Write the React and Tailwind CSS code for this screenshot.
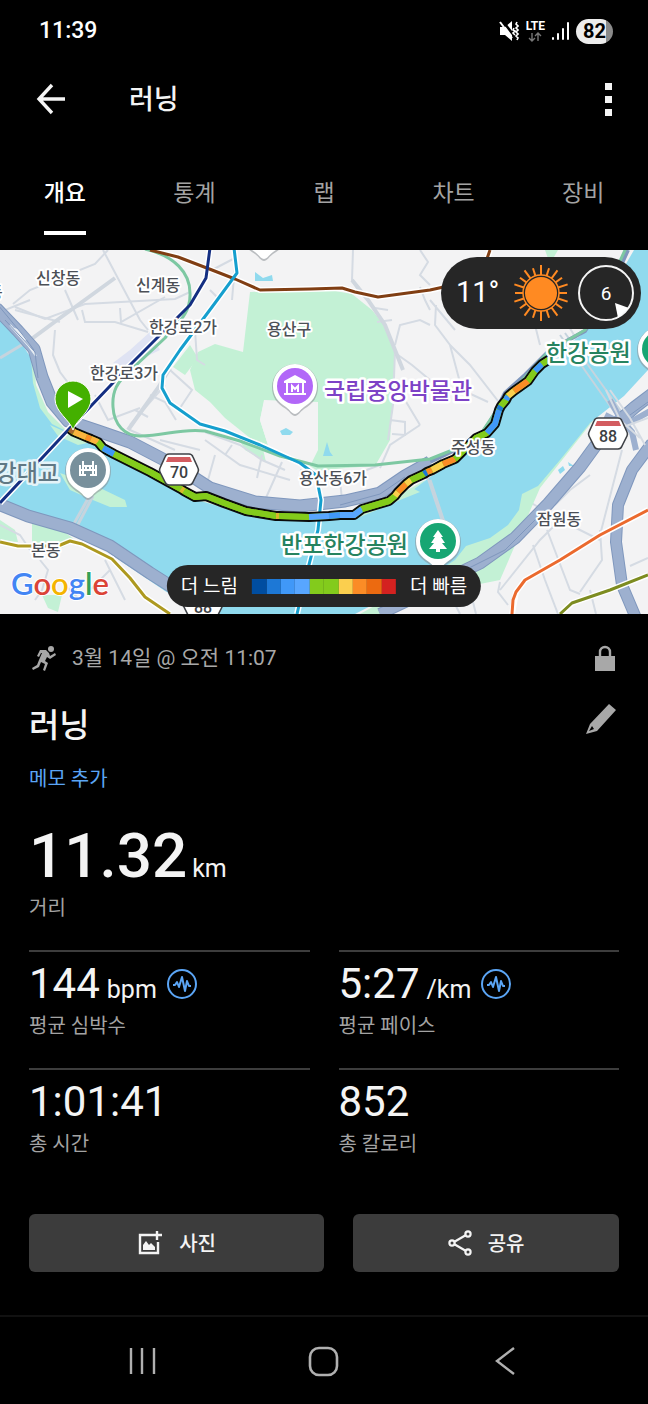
import React, { useState } from "react";

const TABS = ["개요", "통계", "랩", "차트", "장비"];

const PACE_COLORS = [
  "bg-[#004da0]",
  "bg-[#1d78d6]",
  "bg-[#4098f8]",
  "bg-[#58a6ff]",
  "bg-[#83cb1c]",
  "bg-[#83cb1c]",
  "bg-[#fbcf4e]",
  "bg-[#fb8c26]",
  "bg-[#ec6a10]",
  "bg-[#d42220]",
];

// Track points, split wherever the pace colour changes
const ROUTE = [
  { color: "#a8662f", points: "70,429 74,432" },
  { color: "#fbb33f", points: "74,432 86,437" },
  { color: "#fb8c26", points: "86,437 91,439" },
  { color: "#fbb33f", points: "91,439 98,442" },
  { color: "#83cb1c", points: "98,442 103,448" },
  { color: "#4098f8", points: "103,448 114,454" },
  { color: "#83cb1c", points: "114,454 150,472 181,489" },
  { color: "#d8b62c", points: "181,489 184,491" },
  { color: "#83cb1c", points: "184,491 195,497 206,496 224,503 246,511 276,516" },
  { color: "#d8b62c", points: "276,516 279,516" },
  { color: "#83cb1c", points: "279,516 309,517" },
  { color: "#58a6ff", points: "309,517 329,516" },
  { color: "#4098f8", points: "329,516 340,515" },
  { color: "#58a6ff", points: "340,515 354,515 362,509" },
  { color: "#83cb1c", points: "362,509 389,501 395,496" },
  { color: "#fbcf4e", points: "395,496 398,492" },
  { color: "#fb8c26", points: "398,492 406,484" },
  { color: "#fbcf4e", points: "406,484 411,480" },
  { color: "#83cb1c", points: "411,480 424,474" },
  { color: "#1d78d6", points: "424,474 427,472" },
  { color: "#fb8c26", points: "427,472 432,470" },
  { color: "#fbcf4e", points: "432,470 443,464" },
  { color: "#fb8c26", points: "443,464 455,459" },
  { color: "#83cb1c", points: "455,459 466,448 476,438 487,433" },
  { color: "#4098f8", points: "487,433 495,424 499,410" },
  { color: "#1d78d6", points: "499,410 501,406" },
  { color: "#83cb1c", points: "501,406 506,400" },
  { color: "#4098f8", points: "506,400 508,396" },
  { color: "#fbcf4e", points: "508,396 514,391" },
  { color: "#fb8c26", points: "514,391 528,381" },
  { color: "#83cb1c", points: "528,381 535,371" },
  { color: "#4098f8", points: "535,371 542,364" },
  { color: "#83cb1c", points: "542,364 550,359" },
];

const MINOR_ROADS = [
  "M0 312 30 300M13 304 30 290 95 264 108 250M15 307 45 319 85 304 175 299 190 292",
  "M15 310 60 322M103 250 140 320 148 330M65 290 78 320M82 310 85 322 115 322 148 332",
  "M55 330 53 355 60 372 72 388M120 308 121 322 165 297M95 395 108 420 140 408",
  "M130 425 165 385M135 410 148 417M150 395 165 402 176 420M170 370 192 390 180 408",
  "M195 330 197 360 205 365M212 270 235 258M210 290 218 298M235 265 232 300",
  "M353 250 352 280 358 290M420 287 425 300 430 310M375 308 388 310M377 322 392 320",
  "M395 345 400 325 420 320 430 325M398 355 412 365 430 380M395 350 393 405 388 440",
  "M390 420 405 422 405 435 392 434M430 300 455 330M436 305 435 325 450 345 462 390 488 402",
  "M420 250 428 262 420 275 430 285M405 400 420 425M450 345 470 365 505 410",
  "M535 325 540 345M565 320 580 345",
  "M205 432 240 445 262 460 285 470M232 445 225 455M262 455 257 478M282 462 265 500",
  "M205 440 240 465 290 480M340 480 342 500M380 468 390 445 420 425M160 440 200 450",
  "M130 430 175 450M215 455 208 480M300 470 340 480 380 465",
  "M40 560 48 570 42 590 35 600M0 525 20 535 30 550M90 590 110 570M60 580 80 600M105 560 125 600",
  "M518 495 560 520 600 540M500 590 540 540 560 520M500 582 498 592 508 605M547 530 570 590 580 594",
  "M533 545 545 580 558 614M600 530 602 560 580 592M622 450 600 535M590 475 570 490 555 505",
  "M630 566 648 558M470 590 476 614M440 575 460 614M590 590 596 614",
];

const PLACES = [
  { name: "신창동", x: 36, y: 284 },
  { name: "신계동", x: 136, y: 291 },
  { name: "한강로2가", x: 149, y: 333 },
  { name: "한강로3가", x: 90, y: 379 },
  { name: "용산구", x: 267, y: 335 },
  { name: "용산동6가", x: 299, y: 484 },
  { name: "주성동", x: 451, y: 453 },
  { name: "잠원동", x: 537, y: 525 },
  { name: "본동", x: 31, y: 556 },
  { name: "동", x: -12, y: 298 },
];

function Shield({ x, y, label }) {
  return (
    <g transform={`translate(${x} ${y})`}>
      <path d="M-10-16H10Q13-16 14-13L19-2Q20 0 19 2L14 12Q13 15 10 15H-10Q-13 15-14 12L-19 2Q-20 0-19-2L-14-13Q-13-16-10-16Z" fill="#fff" stroke="#3f4247" strokeWidth="1.6" />
      <path d="M-11-13H11L13-8H-13Z" fill="#d35c60" />
      <text x="0" y="8" textAnchor="middle" className="text-[16px] font-medium" fill="#3c4043">{label}</text>
    </g>
  );
}

function Pin({ x, y, color, children }) {
  return (
    <g transform={`translate(${x} ${y})`}>
      <path d="M0 29C-3 29-5 25-9 22C-18 17-23 10-23 0A23 23 0 0 1 23 0C23 10 18 17 9 22C5 25 3 29 0 29Z" fill="#8b9096" opacity=".55" transform="translate(0 1)" />
      <path d="M0 28C-3 28-5 24-9 21C-17 16-22 10-22 0A22 22 0 0 1 22 0C22 10 17 16 9 21C5 24 3 28 0 28Z" fill="#fff" />
      <circle r="18" fill={color} />
      {children}
    </g>
  );
}

function RouteMap() {
  return (
    <svg viewBox="0 250 648 364" preserveAspectRatio="xMidYMid slice" className="block h-full w-full" role="img" aria-label="러닝">
      <rect y="250" width="648" height="364" fill="#f3f3f4" />

      {/* parks */}
      <g fill="#c3f1d5">
        <path d="M250 292 330 290 352 294 372 310 388 330 395 350 395 385 391 425 390 440 375 466 345 468 318 471 310 466 318 450 318 402 264 400 260 420 268 445 250 438 225 418 210 402 195 390 190 370 198 352 215 344 243 352Z" />
        <path d="M190 345 198 358 185 375 173 367Z" />
        <path d="M235 432 262 445 266 462 245 450ZM0 520 15 530 18 542 0 541ZM32 523 62 530 75 540 62 548 32 545ZM42 595 62 595 58 612 48 608Z" />
        <path d="M135 552 148 570 140 566ZM545 250 558 250 550 264ZM360 614 385 600 390 614Z" />
      </g>
      <path d="M113 363 130 350 150 332 160 350 125 367Z" fill="#dfe3f3" />
      <path d="M318 402H264L260 420 268 445 310 462 318 435Z" fill="#f3f3f4" />
      <path d="M255 272 263 278 272 275 273 281H255ZM280 431 286 428 293 432 290 435 282 435ZM327 442 330 452 333 456 323 456Z" fill="#90daee" />

      <g fill="none" stroke="#d5dbe3" strokeWidth="2">
        {MINOR_ROADS.map((d) => (
          <path key={d} d={d} />
        ))}
      </g>
      <path d="M0 360 30 340 60 318 82 302 115 278" fill="none" stroke="#d0d7df" strokeWidth="4" />
      <path d="M352 280 368 300 385 325 395 350 403 370" fill="none" stroke="#d0d7df" strokeWidth="4" />
      <path d="M128 430 158 388 170 368" fill="none" stroke="#d0d7df" strokeWidth="4" />

      {/* river with its green banks */}
      <path d="M33 350 36 385 48 412 70 434 110 457 180 494 240 513 300 522 340 519 380 506 425 480 412 500 340 530 200 520 60 450 20 400ZM648 365 600 412 540 488 500 580 400 600 420 560 470 515 560 440 648 350Z" fill="#c3f1d5" />
      <path d="M0 318 18 338 31 358 33 383 40 408 52 424 68 432 100 445 118 461 150 476 190 498 245 514 280 519 320 521 360 517 392 504 400 500 430 477 470 452 492 433 500 405 512 390 530 378 548 358 580 336 600 318 616 281 634 250H648V370L624 396 590 423 560 460 538 486 522 494 519 510 508 525 490 538 466 546 455 560 425 580 390 596 355 614H205L165 591 122 562 75 528 30 514 0 502Z" fill="#90daee" />
      <path d="M60 473 80 480 100 488 125 500 127 507 110 507 88 498 70 490ZM50 425 70 434 92 442 78 445 58 436ZM395 497 412 488 420 492 400 500Z" fill="#c3f1d5" />
      <path d="M558 470 563 466 565 470 560 474ZM568 462 574 466 569 466Z" fill="#90daee" />

      {/* bridges */}
      <g fill="none" stroke="#c6d4de" strokeWidth="2">
        <path d="M0 358 30 340M90 495 71 529M93 496 75 530M430 480 445 525" strokeWidth="3" />
        <path d="M560 335 620 420M565 333 626 418M425 470 445 530" />
      </g>

      {/* expressways */}
      <g fill="none" strokeLinejoin="round">
        <g stroke="#7f97bd">
          <path d="M-4 308 18 331 34 349 42 377 52 402 68 421 98 431 130 442 176 466 210 488 255 502 300 506 345 501 380 493 405 476 430 462" strokeWidth="13" />
          <path d="M-4 503 28 516 70 528 110 546 150 573 172 587M455 575 480 563 515 538 548 504 580 467 604 434 635 407 652 394" strokeWidth="13" />
          <path d="M652 443 632 470 618 505 616 542 622 585 636 618" strokeWidth="12" />
          <path d="M430 462 455 450 480 438 494 415 505 393 525 375 550 350 585 331 604 302 628 250" strokeWidth="4" />
          <path d="M380 614 405 602 430 590 455 575" strokeWidth="12" />
        </g>
        <g stroke="#9db0cf">
          <path d="M-4 308 18 331 34 349 42 377 52 402 68 421 98 431 130 442 176 466 210 488 255 502 300 506 345 501 380 493 405 476 430 462" strokeWidth="11" />
          <path d="M-4 503 28 516 70 528 110 546 150 573 172 587M455 575 480 563 515 538 548 504 580 467 604 434 635 407 652 394" strokeWidth="11" />
          <path d="M652 443 632 470 618 505 616 542 622 585 636 618M380 614 405 602 430 590 455 575" strokeWidth="10" />
          <path d="M610 400 620 418 632 432 636 450M652 410 625 425 605 415" strokeWidth="6" />
        </g>
        <path d="M10 325 28 345 36 356M12 328 17 330 26 340" stroke="#e7edf3" strokeWidth="2" />
        <path d="M-2 305 22 334 34 350M5 320 35 352 38 378M340 505 380 494 405 477M465 570 505 550 545 510M630 415 648 402" stroke="#7f97bd" strokeWidth="1" />
        <path d="M606 390 620 420 640 438M610 390 630 418 645 445M615 430 648 418" stroke="#d5dbe3" strokeWidth="2" />
      </g>

      {/* metro lines on a white casing */}
      <g fill="none" stroke="#fff" strokeWidth="6" strokeLinejoin="round">
        <path d="M150 250 178 257 212 270 235 279 260 290 310 289 342 288 355 292 378 297 430 290 480 279 490 250" />
        <path d="M234 248 237 273 215 303 180 350 163 375 162 388 170 403 200 424 225 431 260 445 300 463 316 475 321 500 318 530 305 580 297 614" />
        <path d="M210 248 206 278 190 305 130 365 70 428 0 503" />
        <path d="M0 542 18 546 58 546 70 541 82 544 112 559 130 578 145 597 170 614M512 614 516 592 525 580 560 560 600 535 648 510M560 614 572 603 610 590 648 575" />
      </g>
      <g fill="none" strokeWidth="3" strokeLinejoin="round">
        <path d="M145 249C175 256 190 273 190 293C191 315 175 325 165 338L133 368C116 382 112 392 113 407C114 425 125 436 140 436C165 436 180 428 205 431L240 441 280 456 318 466 375 465 430 459 460 447 478 438 502 402 515 388 548 352 585 330 602 300 626 248" stroke="#7dc8a2" />
        <path d="M150 250 178 257 212 270 235 279 260 290 310 289 342 288 355 292 378 297 430 290 480 279 490 250" stroke="#803e13" />
        <path d="M234 248 237 273 215 303 180 350 163 375 162 388 170 403 200 424 225 431 260 445 300 463 316 475 321 500 318 530 305 580 297 614" stroke="#159fce" />
        <path d="M210 248 206 278 190 305 130 365 70 428 0 503" stroke="#142f82" />
        <path d="M0 542 18 546 58 546 70 541 82 544 112 559 130 578 145 597 170 614" stroke="#ad9920" />
        <path d="M512 614 513 600 516 592 525 580 560 560 600 535 648 510" stroke="#eb6a2e" />
        <path d="M560 614 572 603 610 590 648 575" stroke="#7d8c20" />
      </g>

      {/* pace-coloured track */}
      <g fill="none" strokeLinejoin="round">
        <polyline points={ROUTE.map((s) => s.points).join(" ")} stroke="#0b0b0b" strokeWidth="10" />
        <polyline points={ROUTE.map((s) => s.points).join(" ")} stroke="#83cb1c" strokeWidth="6" />
        {ROUTE.map((s) => (
          <polyline key={s.points} points={s.points} stroke={s.color} strokeWidth="6" />
        ))}
      </g>

      <Shield x={179} y={470} label="70" />
      <Shield x={608} y={434} label="88" />
      <Shield x={203} y={605} label="88" />

      <g className="text-[16px] font-medium" fill="#4c5056" stroke="#fff" strokeWidth="4" strokeLinejoin="round" paintOrder="stroke">
        {PLACES.map((p) => (
          <text key={p.name} x={p.x} y={p.y}>{p.name}</text>
        ))}
      </g>
      <g className="text-[23px] font-medium" stroke="#fff" strokeWidth="5" strokeLinejoin="round" paintOrder="stroke">
        <text x="324" y="399" fill="#7d42c6">국립중앙박물관</text>
        <text x="546" y="361" fill="#26835f">한강공원</text>
        <text x="281" y="553" fill="#26835f">반포한강공원</text>
        <text x="59" y="481" textAnchor="end" fill="#607884" stroke="#e4f3f8">한강대교</text>
      </g>

      <Pin x={264} y={231} color="#7d42c6" />
      <Pin x={295} y={386} color="#b267f8">
        <path d="M0-11 11-5V-3H-11V-5ZM-9-3H-7V7H-9ZM7-3H9V7H7ZM-11 7H11V9H-11Z" fill="#fff" />
        <path d="M-3 6V0L0 3 3 0V6" fill="none" stroke="#fff" strokeWidth="2" />
      </Pin>
      <Pin x={88} y={470} color="#78909c">
        <path d="M-5-9V6M5-9V6M-9 5H-2M2 5H9M-9 0H9M-5-4H5M-8-5V0M8-5V0M-2-3V0M2-3V0M-8 5V1M8 5V1" fill="none" stroke="#fff" strokeWidth="2" />
      </Pin>
      <Pin x={438} y={541} color="#17a673">
        <path d="M0-11 5-4H3L7 2H4L9 8H2V11H-2V8H-9L-4 2H-7L-3-4H-5Z" fill="#fff" />
      </Pin>
      <Pin x={660} y={349} color="#17a673" />

      {/* start marker */}
      <path d="M73 430C70 420 55 412 55 399A18 18 0 0 1 91 399C91 412 76 420 73 430Z" fill="#44b000" stroke="#fff" strokeWidth="1" />
      <path d="M68 391V408L83 399Z" fill="#fff" />

      <text x="11" y="595" className="font-[Lato,sans-serif] text-[31px] font-semibold" stroke="#fff" strokeWidth="2" paintOrder="stroke">
        <tspan fill="#4285f4">G</tspan>
        <tspan fill="#db4437">o</tspan>
        <tspan fill="#f4b400">o</tspan>
        <tspan fill="#4285f4">g</tspan>
        <tspan fill="#34a058">l</tspan>
        <tspan fill="#db4437">e</tspan>
      </text>
    </svg>
  );
}

function StatusBar() {
  return (
    <div className="flex h-[62px] items-center justify-between pr-[35px] pl-[39px]">
      <span className="text-[23px] font-medium text-white">11:39</span>
      <div className="flex items-center gap-[7px] text-white">
        <svg viewBox="0 0 20 22" className="h-[22px] w-5" fill="none" stroke="currentColor">
          <path d="M1 7H6L13 1V21L6 15H1Z" fill="currentColor" stroke="none" />
          <path d="M3 0 16 17" stroke="#000" strokeWidth="2.5" />
          <path d="M1 2 13 18" strokeWidth="2" />
          <path d="M15 8 14 10 16 11 14 13 16 15M18 2 17 4 19 6 17 8 19 10 17 12 19 14 17 16 19 18 18 20" strokeWidth="1.6" />
        </svg>
        <div className="flex flex-col items-center">
          <span className="text-[12px] leading-[11px] font-bold">LTE</span>
          <svg viewBox="0 0 14 10" className="h-[10px] w-[14px] text-[#777]" fill="none" stroke="currentColor" strokeWidth="1.4">
            <path d="M4 1V9M1 6 4 9 7 6M10 9V1M7 4 10 1 13 4" />
          </svg>
        </div>
        <svg viewBox="0 0 17 18" className="h-[18px] w-[17px]" fill="none" stroke="currentColor" strokeWidth="2" strokeLinecap="round">
          <path d="M1 16V17M6 12V17M11 7V17M16 1V17" />
        </svg>
        <div className="flex h-[25px] w-[37px] items-center justify-center rounded-full bg-linear-to-r from-[#ececec] from-82% to-[#8a8a8a] to-82% text-[20px] font-bold text-black">
          82
        </div>
      </div>
    </div>
  );
}

function WeatherPill() {
  return (
    <div className="absolute top-[7px] right-[7px] flex h-[72px] w-[200px] items-center justify-between rounded-full bg-[#262626] pr-[7px] pl-[15px] text-white">
      <span className="text-[29px]">11°</span>
      <div className="flex items-center gap-2">
        <svg viewBox="-29 -29 58 58" className="size-[58px]" stroke="#ff8a22" strokeWidth="2">
          <circle r="16" fill="#ff8a22" stroke="none" />
          <circle r="18" fill="none" strokeWidth="1.5" />
          {Array.from({ length: 20 }, (_, i) => (
            <path key={i} d={i % 2 ? "M0-18V-26" : "M0-18V-28"} transform={`rotate(${i * 18})`} />
          ))}
        </svg>
        <svg viewBox="-28 -28 56 56" className="size-[56px]">
          <circle r="27" fill="none" stroke="#f4f4f4" strokeWidth="2" />
          <path d="M9 10 23 15 12 25Z" fill="#fff" />
          <text x="0" y="7" textAnchor="middle" className="text-[19px]" fill="#fff">6</text>
        </svg>
      </div>
    </div>
  );
}

function PaceLegend() {
  return (
    <div className="absolute bottom-[7px] left-1/2 flex h-[42px] -translate-x-1/2 items-center gap-[14px] rounded-full bg-[#262626] px-[14px] text-[19px] whitespace-nowrap text-white">
      <span className="pt-[2px]">더 느림</span>
      <div className="flex h-[15px] w-36">
        {PACE_COLORS.map((color, i) => (
          <div key={i} className={`flex-1 ${color}`}></div>
        ))}
      </div>
      <span className="pt-[2px]">더 빠름</span>
    </div>
  );
}

function PulseBadge() {
  return (
    <svg viewBox="0 0 32 32" className="ml-[9px] size-8 self-center" fill="none" stroke="#5ba5f5" strokeWidth="2">
      <circle cx="16" cy="16" r="14" />
      <path d="M7 17H9L11 14 13 19 16 9 19 23 21 13 23 18H25" strokeWidth="2" strokeLinejoin="round" />
    </svg>
  );
}

function Stat({ value, unit, label, pulse }) {
  return (
    <div className="h-[118px] border-t-2 border-[#3d3d3d] pt-[7px]">
      <div className="flex h-[50px] items-baseline">
        <span className="text-[42px] leading-[50px]">{value}</span>
        {unit && <span className="ml-[7px] text-[25px] leading-[50px]">{unit}</span>}
        {pulse && <PulseBadge />}
      </div>
      <p className="pt-[3px] text-[20px] leading-[28px] text-[#a3a3a3]">{label}</p>
    </div>
  );
}

function App() {
  const [tab, setTab] = useState("개요");

  return (
    <div className="flex min-h-screen flex-col bg-black font-[Roboto,'Noto_Sans_CJK_KR',sans-serif] text-[#f4f4f4]">
      <StatusBar />

      <header className="flex h-[74px] items-center pr-[29px] pl-[35px]">
        <button aria-label="뒤로" className="size-8">
          <svg viewBox="0 0 32 32" className="size-8" fill="none" stroke="currentColor" strokeWidth="3.4">
            <path d="M17 2 4 16 17 30M4 16H30" />
          </svg>
        </button>
        <h1 className="ml-[62px] flex-1 pt-[3px] text-[27px] font-medium">러닝</h1>
        <button aria-label="메뉴" className="flex w-[22px] flex-col items-center gap-[6px]">
          <span className="size-[7px] bg-current"></span>
          <span className="size-[7px] bg-current"></span>
          <span className="size-[7px] bg-current"></span>
        </button>
      </header>

      <nav className="flex h-[114px] pt-[14px]">
        {TABS.map((name) => (
          <button key={name} onClick={() => setTab(name)} className="flex flex-1 justify-center text-[23px]">
            <span className={`flex h-[85px] items-center border-b-4 pt-[7px] ${tab === name ? "border-white font-medium text-white" : "border-transparent text-[#a3a3a3]"}`}>
              {name}
            </span>
          </button>
        ))}
      </nav>

      <section className="relative h-[364px] overflow-hidden">
        <RouteMap />
        <WeatherPill />
        <PaceLegend />
      </section>

      <main className="px-[29px] pt-[26px]">
        <div className="flex h-9 items-center">
          <svg viewBox="0 0 24 26" className="ml-[3px] h-[26px] w-6" fill="#a8a8a8">
            <circle cx="19" cy="4" r="3" />
            <path d="M8 5 14 5 17 8 18 11 23 8 24 10 18 14 15 12 13 16 16 18 13 26 11 25 13 19 9 17 7 22 1 25 0 23 5 20 7 15 10 8H9L7 12 5 11Z" />
          </svg>
          <span className="ml-4 flex-1 pt-[2px] text-[21px] text-[#a8a8a8]">3월 14일 @ 오전 11:07</span>
          <svg viewBox="0 0 20 26" className="mr-[4px] h-[26px] w-5" fill="#a8a8a8">
            <path d="M0 11H20V26H0Z" />
            <path d="M5 12V7A5 5 0 0 1 15 7V12" fill="none" stroke="#a8a8a8" strokeWidth="2.4" />
          </svg>
        </div>

        <div className="mt-5 flex h-[56px] items-center justify-between">
          <h2 className="pt-[3px] text-[33px] font-medium">러닝</h2>
          <button aria-label="편집" className="mr-[2px] mb-[10px] size-8">
            <svg viewBox="0 0 32 32" className="size-8" fill="#a8a8a8">
              <path fillRule="evenodd" d="M24 1 31 7 12 28 1 31 5 21ZM7 23 4 28 9 26Z" />
            </svg>
          </button>
        </div>

        <button className="mt-2 block h-9 pt-[2px] text-[20px] text-[#5ba5f5]">메모 추가</button>

        <div className="mt-6 flex items-baseline">
          <span className="text-[62px] leading-[72px] font-medium">11.32</span>
          <span className="ml-[5px] text-[25px]">km</span>
        </div>
        <p className="mt-[2px] text-[20px] leading-[28px] text-[#a3a3a3]">거리</p>

        <div className="mt-7 grid grid-cols-2 gap-x-[29px]">
          <Stat value="144" unit="bpm" label="평균 심박수" pulse />
          <Stat value="5:27" unit="/km" label="평균 페이스" pulse />
          <Stat value="1:01:41" label="총 시간" />
          <Stat value="852" label="총 칼로리" />
        </div>

        <div className="mt-7 flex gap-[29px] text-[20px] font-medium">
          <button className="flex h-[58px] flex-10 items-center justify-center gap-4 rounded-md bg-[#3c3c3c]">
            <svg viewBox="0 0 26 26" className="size-[26px]" fill="none" stroke="currentColor" strokeWidth="2.4">
              <path d="M15 5H3V23H21V12M20 1V10M15 5H25" />
              <path d="M6 20V15L9 11 12 15 14 13 18 17V20Z" fill="currentColor" stroke="none" />
            </svg>
            <span className="pt-[2px]">사진</span>
          </button>
          <button className="flex h-[58px] flex-9 items-center justify-center gap-4 rounded-md bg-[#3c3c3c]">
            <svg viewBox="0 0 24 26" className="h-[26px] w-6" fill="none" stroke="currentColor" strokeWidth="2.2">
              <circle cx="20" cy="4" r="2.6" />
              <circle cx="4" cy="13" r="2.6" />
              <circle cx="20" cy="22" r="2.6" />
              <path d="M6 12 18 5M6 14 18 21" />
            </svg>
            <span className="pt-[2px]">공유</span>
          </button>
        </div>
      </main>

      <footer className="mt-auto flex h-[89px] items-center justify-around border-t-2 border-[#111] px-[52px] text-[#b0b0b0]">
        <button aria-label="최근 앱" className="size-8">
          <svg viewBox="0 0 32 32" className="size-8" fill="none" stroke="currentColor" strokeWidth="2.4">
            <path d="M4 3V29M15 3V29M27 3V29" />
          </svg>
        </button>
        <button aria-label="홈" className="size-8">
          <svg viewBox="0 0 32 32" className="size-8" fill="none" stroke="currentColor" strokeWidth="2.6">
            <rect x="2" y="3" width="27" height="27" rx="9" />
          </svg>
        </button>
        <button aria-label="이전" className="size-8">
          <svg viewBox="0 0 32 32" className="size-8" fill="none" stroke="currentColor" strokeWidth="2.4">
            <path d="M25 3 8 16 25 29" />
          </svg>
        </button>
      </footer>
    </div>
  );
}

export default App;
